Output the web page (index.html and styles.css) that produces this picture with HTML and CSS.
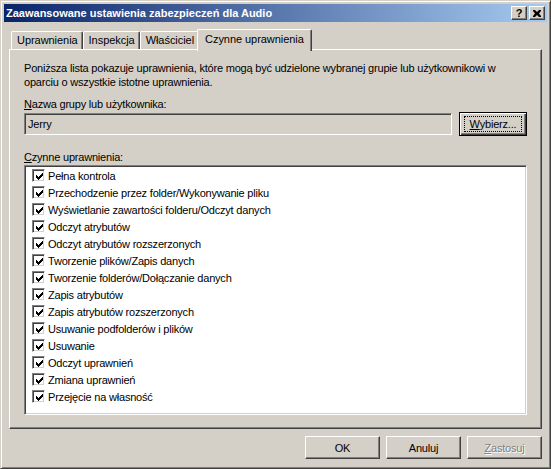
FILE: index.html
```html
<!DOCTYPE html>
<html lang="pl">
<head>
<meta charset="utf-8">
<title>Zaawansowane ustawienia zabezpieczeń dla Audio</title>
<link rel="stylesheet" href="styles.css">
</head>
<body>
<div class="window">
  <div class="titlebar">
    <span class="title">Zaawansowane ustawienia zabezpieczeń dla Audio</span>
    <div class="tbuttons">
      <div class="tbtn help">?</div>
      <div class="tbtn close"><svg width="8" height="7" viewBox="0 0 8 7"><path d="M0 0h2l2 2 2-2h2v1L6 3.5 8 6v1H6L4 5 2 7H0V6l2-2.5L0 1z" fill="#000"/></svg></div>
    </div>
  </div>
  <div class="tabs">
    <div class="tab">Uprawnienia</div>
    <div class="tab">Inspekcja</div>
    <div class="tab">Właściciel</div>
    <div class="tab active">Czynne uprawnienia</div>
  </div>
  <div class="panel">
    <p class="desc">Poniższa lista pokazuje uprawnienia, które mogą być udzielone wybranej grupie lub użytkownikowi w oparciu o wszystkie istotne uprawnienia.</p>
    <div class="label"><u>N</u>azwa grupy lub użytkownika:</div>
    <div class="field-row">
      <div class="field">Jerry</div>
      <div class="btn default"><span class="focus"><u>W</u>ybierz...</span></div>
    </div>
    <div class="label label2"><u>C</u>zynne uprawnienia:</div>
    <div class="list">
      <div class="item"><span class="cb"></span>Pełna kontrola</div>
      <div class="item"><span class="cb"></span>Przechodzenie przez folder/Wykonywanie pliku</div>
      <div class="item"><span class="cb"></span>Wyświetlanie zawartości folderu/Odczyt danych</div>
      <div class="item"><span class="cb"></span>Odczyt atrybutów</div>
      <div class="item"><span class="cb"></span>Odczyt atrybutów rozszerzonych</div>
      <div class="item"><span class="cb"></span>Tworzenie plików/Zapis danych</div>
      <div class="item"><span class="cb"></span>Tworzenie folderów/Dołączanie danych</div>
      <div class="item"><span class="cb"></span>Zapis atrybutów</div>
      <div class="item"><span class="cb"></span>Zapis atrybutów rozszerzonych</div>
      <div class="item"><span class="cb"></span>Usuwanie podfolderów i plików</div>
      <div class="item"><span class="cb"></span>Usuwanie</div>
      <div class="item"><span class="cb"></span>Odczyt uprawnień</div>
      <div class="item"><span class="cb"></span>Zmiana uprawnień</div>
      <div class="item"><span class="cb"></span>Przejęcie na własność</div>
    </div>
  </div>
  <div class="buttons">
    <div class="btn">OK</div>
    <div class="btn">Anuluj</div>
    <div class="btn disabled"><u>Z</u>astosuj</div>
  </div>
</div>
</body>
</html>
```
FILE: styles.css
```css
* { box-sizing: border-box; }
html, body { margin: 0; padding: 0; }
body {
  width: 551px; height: 469px;
  background: #d4d0c8;
  font-family: "Liberation Sans", Arial, sans-serif;
  font-size: 11px;
  letter-spacing: -0.2px;
  color: #000;
  overflow: hidden;
}
.window {
  width: 551px; height: 469px;
  background: #d4d0c8;
  border: 1px solid;
  border-color: #d4d0c8 #404040 #404040 #d4d0c8;
  box-shadow: inset 1px 1px #fff, inset -1px -1px #808080;
  padding: 3px;
  display: flex;
  flex-direction: column;
}
.titlebar {
  height: 18px;
  background: linear-gradient(to right, #0a246a, #a6caf0);
  display: flex;
  align-items: center;
  justify-content: space-between;
  padding: 0 2px 0 2px;
}
.title {
  color: #fff;
  font-weight: bold;
  font-size: 11px;
  letter-spacing: 0;
  line-height: 18px;
  white-space: nowrap;
}
.tbuttons { display: flex; gap: 2px; }
.tbtn {
  width: 16px; height: 14px;
  background: #d4d0c8;
  border: 1px solid;
  border-color: #fff #404040 #404040 #fff;
  box-shadow: inset -1px -1px #808080;
  display: flex; align-items: center; justify-content: center;
  font-weight: bold;
  font-size: 11px;
  letter-spacing: 0;
  line-height: 12px;
}
.tbtn.help { padding-bottom: 1px; }
.tabs {
  display: flex;
  align-items: flex-end;
  height: 20px;
  margin-top: 7px;
  padding-left: 7px;
  position: relative;
  z-index: 1;
}
.tab {
  height: 18px;
  padding: 0 4px 0 5px;
  line-height: 17px;
  letter-spacing: -0.05px;
  border-top: 1px solid #fff;
  border-left: 1px solid #fff;
  border-right: 1px solid #404040;
  box-shadow: inset -1px 0 #808080;
  border-radius: 2px 2px 0 0;
  white-space: nowrap;
}
.tab.active {
  height: 22px;
  margin: 0 -2px -2px -2px;
  padding: 0 7px 0 7px;
  line-height: 19px;
  background: #d4d0c8;
  position: relative;
}
.panel {
  margin: 0 5px;
  height: 380px;
  border: 1px solid;
  border-color: #fff #404040 #404040 #fff;
  box-shadow: inset -1px -1px #808080;
  padding: 11px 14px 14px 14px;
}
.desc {
  margin: 0;
  line-height: 14px;
}
.label { line-height: 13px; margin-top: 9px; }
.label2 { margin-top: 15px; }
.field-row {
  display: flex;
  align-items: center;
  margin-top: 1px;
}
.field {
  width: 428px; height: 22px;
  border: 1px solid;
  border-color: #808080 #fff #fff #808080;
  box-shadow: inset 1px 1px #404040, inset -1px -1px #d4d0c8;
  padding: 0 3px;
  line-height: 20px;
}
.btn {
  width: 75px; height: 23px;
  border: 1px solid;
  border-color: #fff #404040 #404040 #fff;
  box-shadow: inset -1px -1px #808080;
  display: flex; align-items: center; justify-content: center;
  background: #d4d0c8;
}
.field-row .btn { width: 68px; margin-left: 7px; height: 24px; }
.btn.default {
  border: 1px solid #000;
  box-shadow: inset 1px 1px #fff, inset -1px -1px #404040, inset -2px -2px #808080;
}
.focus {
  border: 1px dotted #000;
  padding: 0 3px;
  line-height: 14px;
  height: 16px;
  width: 58px;
  text-align: center;
}
.list {
  margin-top: 1px;
  height: 250px;
  background: #fff;
  border: 1px solid;
  border-color: #808080 #fff #fff #808080;
  box-shadow: inset 1px 1px #404040, inset -1px -1px #d4d0c8;
  padding: 1px 0 0 7px;
}
.item {
  height: 17px;
  display: flex;
  align-items: center;
  white-space: nowrap;
}
.cb {
  width: 13px; height: 13px;
  margin-right: 3px;
  border: 1px solid;
  border-color: #808080 #fff #fff #808080;
  box-shadow: inset 1px 1px #404040, inset -1px -1px #d4d0c8;
  background: #fff url("data:image/svg+xml;utf8,<svg xmlns='http://www.w3.org/2000/svg' width='7' height='7' viewBox='0 0 7 7' shape-rendering='crispEdges'><path d='M6 0h1v3H6v1H5v1H4v1H3v1H2V6H1V5H0V2h1v1h1v1h1V3h1V2h1V1h1z' fill='black'/></svg>") no-repeat 3px 3px;
  flex: none;
}
.buttons {
  display: flex;
  justify-content: flex-end;
  gap: 6px;
  margin-top: 7px;
  padding-right: 5px;
}
.btn.disabled { color: #808080; text-shadow: 1px 1px #fff; }
u { text-decoration: underline; text-underline-offset: 1px; }
```
